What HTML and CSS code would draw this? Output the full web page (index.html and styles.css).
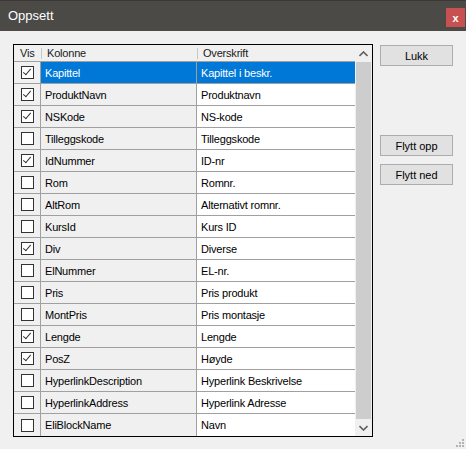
FILE: index.html
```html
<!DOCTYPE html>
<html lang="no">
<head>
    <meta charset="UTF-8">
    <title>Oppsett</title>
    <link rel="stylesheet" href="styles.css">
</head>
<body>
    <div class="window">
        <div class="titlebar">
            <span class="title">Oppsett</span>
            <span class="close">x</span>
        </div>
        <div class="content">
            <div class="grid">
                <div class="table">
                    <div class="row head">
                        <div class="cell vis">Vis</div>
                        <div class="cell">Kolonne</div>
                        <div class="cell">Overskrift</div>
                    </div>
                    <div class="row selected">
                        <div class="cell vis"><span class="check on"></span></div>
                        <div class="cell name">Kapittel</div>
                        <div class="cell label">Kapittel i beskr.</div>
                    </div>
                    <div class="row">
                        <div class="cell vis"><span class="check on"></span></div>
                        <div class="cell name">ProduktNavn</div>
                        <div class="cell label">Produktnavn</div>
                    </div>
                    <div class="row">
                        <div class="cell vis"><span class="check on"></span></div>
                        <div class="cell name">NSKode</div>
                        <div class="cell label">NS-kode</div>
                    </div>
                    <div class="row">
                        <div class="cell vis"><span class="check"></span></div>
                        <div class="cell name">Tilleggskode</div>
                        <div class="cell label">Tilleggskode</div>
                    </div>
                    <div class="row">
                        <div class="cell vis"><span class="check on"></span></div>
                        <div class="cell name">IdNummer</div>
                        <div class="cell label">ID-nr</div>
                    </div>
                    <div class="row">
                        <div class="cell vis"><span class="check"></span></div>
                        <div class="cell name">Rom</div>
                        <div class="cell label">Romnr.</div>
                    </div>
                    <div class="row">
                        <div class="cell vis"><span class="check"></span></div>
                        <div class="cell name">AltRom</div>
                        <div class="cell label">Alternativt romnr.</div>
                    </div>
                    <div class="row">
                        <div class="cell vis"><span class="check"></span></div>
                        <div class="cell name">KursId</div>
                        <div class="cell label">Kurs ID</div>
                    </div>
                    <div class="row">
                        <div class="cell vis"><span class="check on"></span></div>
                        <div class="cell name">Div</div>
                        <div class="cell label">Diverse</div>
                    </div>
                    <div class="row">
                        <div class="cell vis"><span class="check"></span></div>
                        <div class="cell name">ElNummer</div>
                        <div class="cell label">EL-nr.</div>
                    </div>
                    <div class="row">
                        <div class="cell vis"><span class="check"></span></div>
                        <div class="cell name">Pris</div>
                        <div class="cell label">Pris produkt</div>
                    </div>
                    <div class="row">
                        <div class="cell vis"><span class="check"></span></div>
                        <div class="cell name">MontPris</div>
                        <div class="cell label">Pris montasje</div>
                    </div>
                    <div class="row">
                        <div class="cell vis"><span class="check on"></span></div>
                        <div class="cell name">Lengde</div>
                        <div class="cell label">Lengde</div>
                    </div>
                    <div class="row">
                        <div class="cell vis"><span class="check on"></span></div>
                        <div class="cell name">PosZ</div>
                        <div class="cell label">Høyde</div>
                    </div>
                    <div class="row">
                        <div class="cell vis"><span class="check"></span></div>
                        <div class="cell name">HyperlinkDescription</div>
                        <div class="cell label">Hyperlink Beskrivelse</div>
                    </div>
                    <div class="row">
                        <div class="cell vis"><span class="check"></span></div>
                        <div class="cell name">HyperlinkAddress</div>
                        <div class="cell label">Hyperlink Adresse</div>
                    </div>
                    <div class="row last">
                        <div class="cell vis"><span class="check"></span></div>
                        <div class="cell name">EliBlockName</div>
                        <div class="cell label">Navn</div>
                    </div>
                </div>
                <div class="scrollbar">
                    <div class="arrow">
                        <svg width="9" height="6" viewBox="0 0 9 6"><polyline points="0.5,5 4.5,1 8.5,5" fill="none" stroke="#606060" stroke-width="1.6"/></svg>
                    </div>
                    <div class="thumb"></div>
                    <div class="arrow">
                        <svg width="9" height="6" viewBox="0 0 9 6"><polyline points="0.5,1 4.5,5 8.5,1" fill="none" stroke="#606060" stroke-width="1.6"/></svg>
                    </div>
                </div>
            </div>
            <div class="buttons">
                <button class="btn">Lukk</button>
                <button class="btn move">Flytt opp</button>
                <button class="btn">Flytt ned</button>
            </div>
        </div>
        <div class="grip"></div>
    </div>
</body>
</html>
```

FILE: styles.css
```css
body {
    margin: 0;
    font-family: "Liberation Sans", Arial, sans-serif;
    font-size: 11px;
    color: #000;
    background-color: #f0f0f0;
}
.window {
    width: 466px;
    height: 449px;
    position: relative;
    background-color: #f0f0f0;
}
.titlebar {
    height: 31px;
    background-color: #4b4a47;
    border-top: 1px solid #3a3937;
    box-sizing: border-box;
    display: flex;
    align-items: center;
    justify-content: space-between;
}
.title {
    color: #fff;
    font-size: 13px;
    margin-left: 8px;
    margin-top: -1px;
}
.close {
    width: 19px;
    height: 19px;
    margin-right: 1px;
    margin-top: 3px;
    background-color: #c75050;
    color: #fff;
    font-size: 11px;
    font-weight: bold;
    display: flex;
    align-items: center;
    justify-content: center;
}
.content {
    display: flex;
    padding: 13px 0 0 13px;
    gap: 7px;
}
.grid {
    display: flex;
    border: 1px solid #000;
    width: 358px;
    height: 391px;
}
.table {
    width: 341px;
}
.row {
    display: grid;
    grid-template-columns: 27px 156px 158px;
    height: 22px;
}
.row.head {
    height: 17px;
}
.cell {
    border-right: 1px solid #a0a0a0;
    border-bottom: 1px solid #a0a0a0;
    padding-left: 4px;
    display: flex;
    align-items: center;
    white-space: nowrap;
    letter-spacing: -0.2px;
    background-color: #f0f0f0;
}
.row.last .cell {
    border-bottom: none;
}
.cell.label {
    background-color: #fff;
    border-right: none;
}
.head .cell {
    background-color: #f0f0f0;
    border-right: none;
    position: relative;
    padding-left: 6px;
    color: #1a1a1a;
}
.head .cell.vis {
    padding-left: 6px;
}
.head .cell + .cell::before {
    content: "";
    position: absolute;
    left: 0;
    top: 3px;
    height: 11px;
    border-left: 1px solid #c8c8c8;
}
.cell.vis {
    padding-left: 7px;
}
.selected .name,
.selected .label {
    background-color: #0078d7;
    color: #fff;
}
.check {
    width: 11px;
    height: 11px;
    border: 1px solid #333;
    background-color: #fff;
    position: relative;
}
.check.on::after {
    content: "";
    position: absolute;
    left: 3px;
    top: 0px;
    width: 3px;
    height: 7px;
    border-right: 1px solid #333;
    border-bottom: 1px solid #333;
    transform: rotate(40deg);
}
.scrollbar {
    width: 17px;
    display: flex;
    flex-direction: column;
    background-color: #f0f0f0;
}
.arrow {
    height: 17px;
    display: flex;
    align-items: center;
    justify-content: center;
}
.thumb {
    flex: 1;
    margin: 0 1px;
    background-color: #cdcdcd;
}
.buttons {
    display: flex;
    flex-direction: column;
    gap: 8px;
    padding-top: 1px;
}
.btn {
    width: 73px;
    height: 21px;
    background-color: #e1e1e1;
    border: 1px solid #adadad;
    font-family: "Liberation Sans", Arial, sans-serif;
    font-size: 11px;
    color: #000;
    padding: 0;
}
.btn.move {
    margin-top: 61px;
}
.grip {
    position: absolute;
    right: 2px;
    bottom: 2px;
    width: 8px;
    height: 8px;
    background:
        linear-gradient(#b4b4b4, #b4b4b4) 6px 0 / 2px 2px no-repeat,
        linear-gradient(#b4b4b4, #b4b4b4) 3px 3px / 2px 2px no-repeat,
        linear-gradient(#b4b4b4, #b4b4b4) 6px 3px / 2px 2px no-repeat,
        linear-gradient(#b4b4b4, #b4b4b4) 0 6px / 2px 2px no-repeat,
        linear-gradient(#b4b4b4, #b4b4b4) 3px 6px / 2px 2px no-repeat,
        linear-gradient(#b4b4b4, #b4b4b4) 6px 6px / 2px 2px no-repeat;
}
```
